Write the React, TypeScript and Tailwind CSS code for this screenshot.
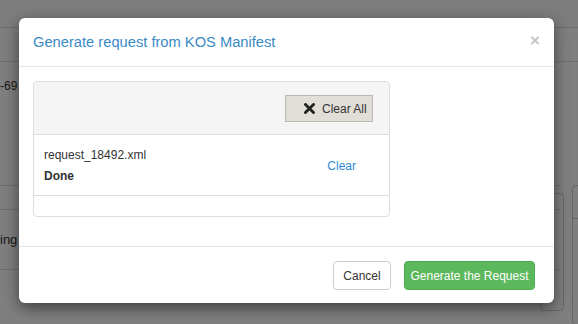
import React from "react";

export default function App() {
  const font = { fontFamily: '"Liberation Sans", Arial, sans-serif' };
  return (
    <div className="relative w-[578px] h-[324px] overflow-hidden bg-white" style={font}>
      {/* background page */}
      <div className="flex flex-col w-full h-full text-[12px] text-[#333]">
        <div className="h-[28px] border-b border-[#ddd] bg-[#fafafa]" />
        <div className="h-[34px] border-b border-[#ddd]" />
        <div className="h-[123px] pt-[15px]">
          <span>-69</span>
        </div>
        <div className="flex">
          <div className="w-[560px] flex flex-col">
            <div className="h-[25px] border-t border-b border-[#ddd]" />
            <div className="h-[60px] border-b border-[#ddd] flex items-center">
              <span className="text-[13px]">ing</span>
            </div>
          </div>
        </div>
      </div>
      <div className="absolute left-[540px] top-[193px] w-[24px] h-[118px] border border-[#ccc] rounded-[4px]" />
      <div className="absolute left-[572px] top-[185px] w-[20px] h-[140px] border border-[#ccc] rounded-[4px] flex flex-col">
        <div className="h-[33px] border-b border-[#ccc]" />
      </div>
      {/* backdrop */}
      <div className="absolute inset-0 bg-black/50" />

      {/* modal */}
      <div className="absolute left-[19px] top-[18px] w-[535px] h-[285px] bg-white rounded-[6px] shadow-[0_5px_15px_rgba(0,0,0,0.5)] flex flex-col">
        <div className="h-[49px] border-b border-[#e5e5e5] flex items-center justify-between pl-[14px] pr-[14px]">
          <h4 className="text-[14.7px] text-[#3a8ac6] leading-none">Generate request from KOS Manifest</h4>
          <span className="text-[#c4c4c4] text-[17px] font-bold leading-none -mt-[4px] ml-[1px]">×</span>
        </div>
        <div className="px-[14px] pt-[14px] pb-[29px]">
          <div className="w-[357px] border border-[#ddd] rounded-[4px] flex flex-col">
            <div className="h-[53px] bg-[#f5f5f5] border-b border-[#ddd] rounded-t-[4px] flex items-start justify-end pt-[13px] pr-[16px]">
              <button className="h-[27px] w-[88px] bg-[#e1ded7] border border-[#bdb9b1] flex items-center justify-start pl-[18px] gap-[7px] text-[12px] text-[#333] whitespace-nowrap">
                <svg width="11" height="11" viewBox="0 0 11 11" className="shrink-0">
                  <path d="M1.5 1.5 L9.5 9.5 M9.5 1.5 L1.5 9.5" stroke="#222" strokeWidth="2.8" strokeLinecap="square" />
                </svg>
                <span>Clear All</span>
              </button>
            </div>
            <div className="h-[61px] border-b border-[#ddd] flex items-center pl-[10px] pr-[33px]">
              <div className="flex-1 flex flex-col gap-[7px] text-[12px] text-[#333] leading-[14px]">
                <span>request_18492.xml</span>
                <span className="font-bold">Done</span>
              </div>
              <span className="text-[12px] text-[#2e8bd4] mt-[2px]">Clear</span>
            </div>
            <div className="h-[20px]" />
          </div>
        </div>
        <div className="flex-1 border-t border-[#e5e5e5] flex items-start justify-end pt-[14px] pr-[19px] gap-[13px]">
          <button className="h-[29px] w-[58px] bg-white border border-[#ccc] rounded-[4px] text-[12px] text-[#333]">Cancel</button>
          <button className="h-[29px] w-[131px] bg-[#5cb85c] border border-[#4cae4c] rounded-[4px] text-[12px] text-white">Generate the Request</button>
        </div>
      </div>
    </div>
  );
}
